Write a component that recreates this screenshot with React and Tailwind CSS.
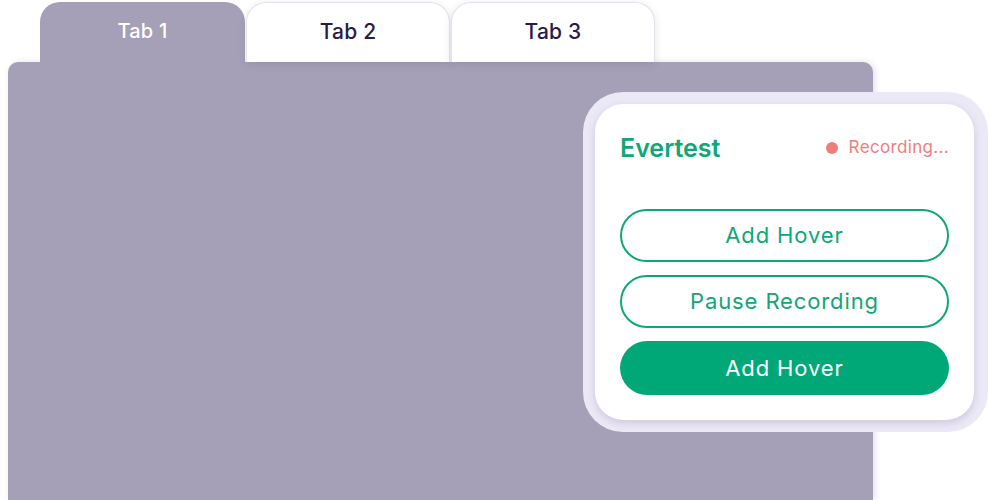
export default function App() {
  const tabs = ['Tab 1', 'Tab 2', 'Tab 3']
  return (
    <div className="relative h-[500px] w-[989px] overflow-hidden bg-white font-['Inter',sans-serif]">
      <div className="pl-[8px] pt-[2px]">
        <div className="flex gap-[1px] pl-[32px]">
          {tabs.map((t, i) =>
            i === 0 ? (
              <div
                key={t}
                className="flex h-[60px] w-[205px] items-start justify-center rounded-t-[20px] bg-[#a5a0b7] pt-[14px] text-[20px] font-medium tracking-[0.01em] text-white"
              >
                {t}
              </div>
            ) : (
              <div
                key={t}
                className="flex h-[60px] w-[204px] items-start justify-center rounded-t-[20px] border border-b-0 border-[#e4e2ea] bg-white pt-[13px] text-[21px] font-medium tracking-[0.01em] text-[#2a1a4c] shadow-[0_2px_8px_rgba(60,40,100,0.12)]"
              >
                {t}
              </div>
            )
          )}
        </div>
        <div className="h-[438px] w-[865px] rounded-t-[10px] bg-[#a5a0b7] shadow-[2px_0_6px_rgba(60,40,100,0.15)]" />
      </div>

      <div className="absolute left-[583px] top-[92px] rounded-[40px] bg-[#ece9f7] p-[12px] pr-[14px]">
        <div className="flex w-[379px] flex-col rounded-[28px] bg-white px-[25px] pb-[25px] pt-[28px] shadow-[0_3px_8px_rgba(60,40,100,0.18)]">
          <div className="flex items-center justify-between">
            <span className="text-[25px] font-semibold leading-[32px] text-[#0fa775]">Evertest</span>
            <span className="flex items-center gap-[11px] text-[17px] tracking-[0.02em] text-[#f07e7c]">
              <span className="h-[12px] w-[12px] rounded-full bg-[#f07e7c]" />
              Recording...
            </span>
          </div>
          <div className="mt-[45px] flex flex-col gap-[13px]">
            <button className="h-[53px] rounded-full border-2 border-[#0fa775] text-[22px] tracking-[0.04em] text-[#0fa775]">
              Add Hover
            </button>
            <button className="h-[53px] rounded-full border-2 border-[#0fa775] text-[22px] tracking-[0.04em] text-[#0fa775]">
              Pause Recording
            </button>
            <button className="h-[54px] rounded-full bg-[#00a878] text-[22px] tracking-[0.04em] text-white">
              Add Hover
            </button>
          </div>
        </div>
      </div>
    </div>
  )
}
